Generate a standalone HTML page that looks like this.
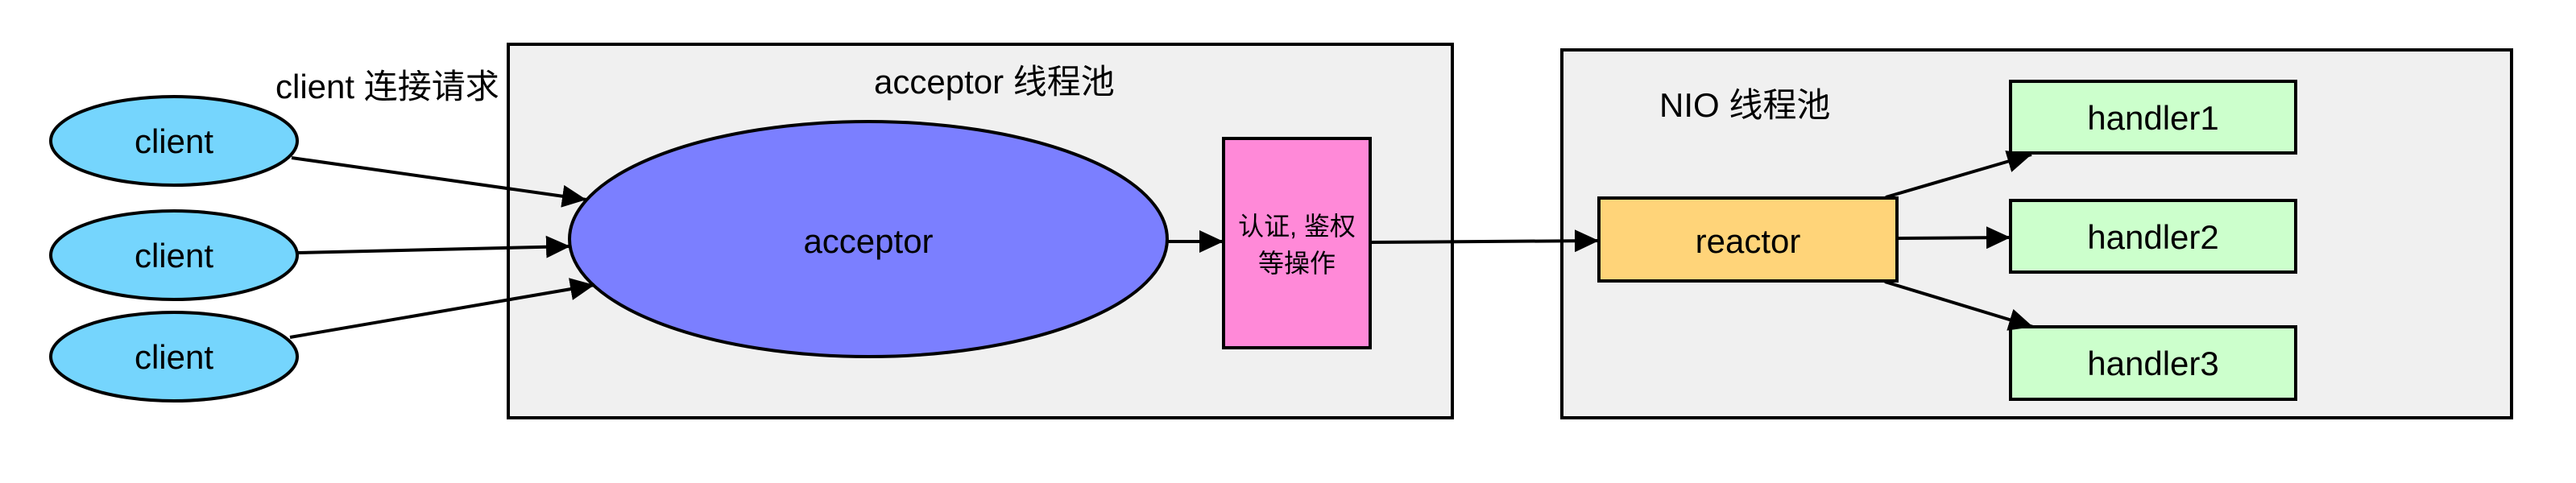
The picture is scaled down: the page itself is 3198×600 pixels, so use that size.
<!DOCTYPE html>
<html><head><meta charset="utf-8"><style>
html,body{margin:0;padding:0;background:#fff;}
svg{display:block}
text{font-family:"Liberation Sans","Noto Sans CJK SC",sans-serif;fill:#000}
</style></head><body>
<svg width="3198" height="600" viewBox="0 0 3198 600" xmlns="http://www.w3.org/2000/svg">
<defs>
<marker id="ar" markerUnits="userSpaceOnUse" markerWidth="32" markerHeight="28" refX="30" refY="14" orient="auto">
<path d="M0,0 L30,14 L0,28 Z" fill="#000"/>
</marker>
</defs>
<rect x="631" y="55" width="1172" height="464" fill="#f0f0f0" stroke="#000" stroke-width="4"/>
<rect x="1939" y="62" width="1179" height="457" fill="#f0f0f0" stroke="#000" stroke-width="4"/>

<g fill="#75d5fd" stroke="#000" stroke-width="4">
<ellipse cx="216" cy="175" rx="153" ry="55"/>
<ellipse cx="216" cy="317" rx="153" ry="55"/>
<ellipse cx="216" cy="443" rx="153" ry="55"/>
</g>
<ellipse cx="1078" cy="297" rx="371" ry="146" fill="#7b7fff" stroke="#000" stroke-width="4"/>
<rect x="1519" y="172" width="182" height="260" fill="#ff89d8" stroke="#000" stroke-width="4"/>
<rect x="1985" y="246" width="370" height="103" fill="#ffd479" stroke="#000" stroke-width="4"/>
<g fill="#ccffcc" stroke="#000" stroke-width="4">
<rect x="2496" y="101" width="354" height="89"/>
<rect x="2496" y="249" width="354" height="89"/>
<rect x="2496" y="406" width="354" height="90"/>
</g>

<g stroke="#000" stroke-width="4" fill="none" marker-end="url(#ar)">
<line x1="362" y1="196" x2="728" y2="248"/>
<line x1="370" y1="314" x2="708" y2="306"/>
<line x1="360" y1="419" x2="738" y2="354"/>
<line x1="1449" y1="300" x2="1519" y2="300"/>
<line x1="1701" y1="301" x2="1985" y2="299"/>
<line x1="2341" y1="245" x2="2522" y2="192"/>
<line x1="2355" y1="296" x2="2496" y2="295"/>
<line x1="2340" y1="350" x2="2524" y2="406"/>
</g>

<g font-size="42">
<text x="342" y="122">client 连接请求</text>
<text x="1085" y="116">acceptor 线程池</text>
<text x="2060" y="145">NIO 线程池</text>
<text x="216" y="190" text-anchor="middle">client</text>
<text x="216" y="332" text-anchor="middle">client</text>
<text x="216" y="458" text-anchor="middle">client</text>
<text x="1078" y="314" text-anchor="middle">acceptor</text>
<text x="2170" y="314" text-anchor="middle">reactor</text>
<text x="2673" y="161" text-anchor="middle">handler1</text>
<text x="2673" y="309" text-anchor="middle">handler2</text>
<text x="2673" y="466" text-anchor="middle">handler3</text>
</g>
<g font-size="32">
<text x="1610" y="292" text-anchor="middle">认证, 鉴权</text>
<text x="1610" y="338" text-anchor="middle">等操作</text>
</g>
</svg>
</body></html>
